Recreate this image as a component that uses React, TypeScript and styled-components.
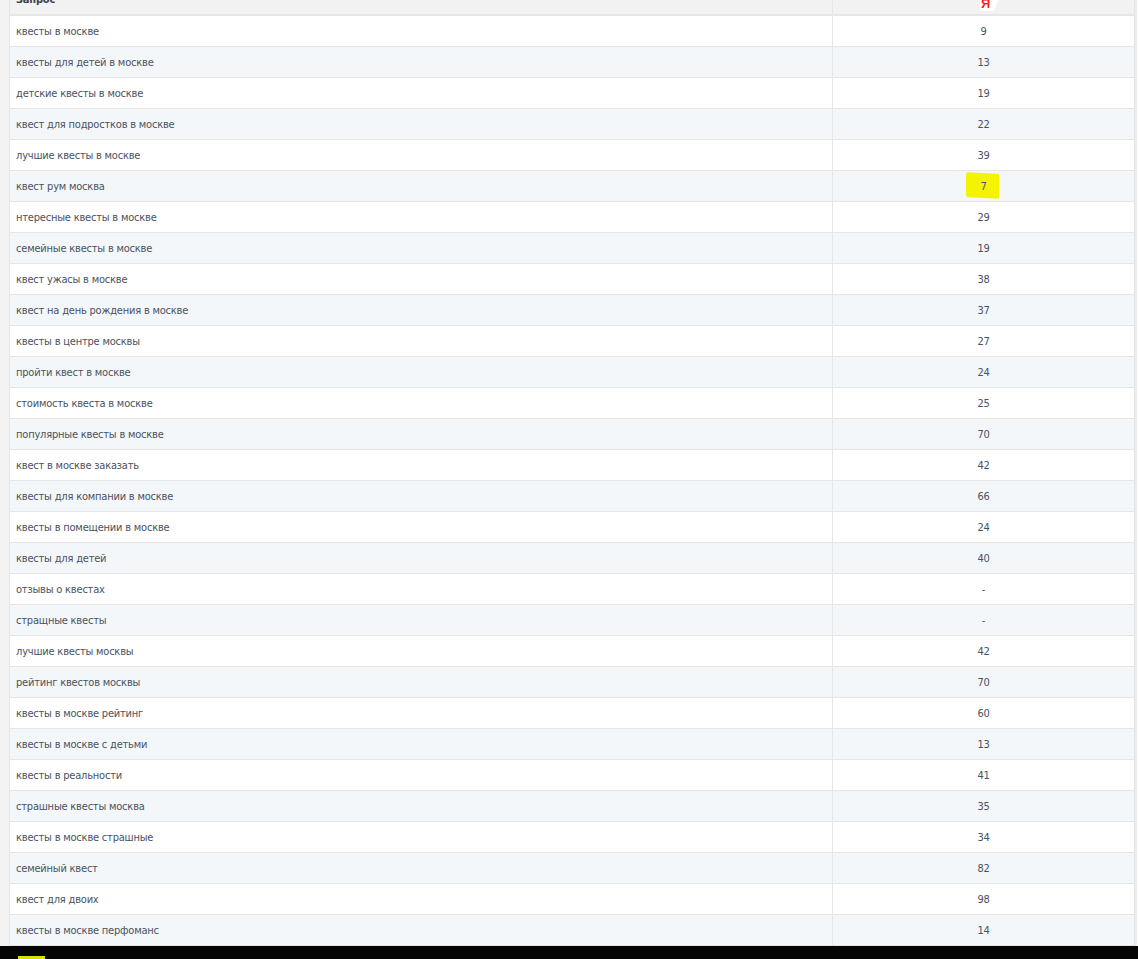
import React from 'react';
import styled, { createGlobalStyle } from 'styled-components';

const rows: { query: string; pos: string; mark?: boolean }[] = [
  { query: 'квесты в москве', pos: '9' },
  { query: 'квесты для детей в москве', pos: '13' },
  { query: 'детские квесты в москве', pos: '19' },
  { query: 'квест для подростков в москве', pos: '22' },
  { query: 'лучшие квесты в москве', pos: '39' },
  { query: 'квест рум москва', pos: '7', mark: true },
  { query: 'нтересные квесты в москве', pos: '29' },
  { query: 'семейные квесты в москве', pos: '19' },
  { query: 'квест ужасы в москве', pos: '38' },
  { query: 'квест на день рождения в москве', pos: '37' },
  { query: 'квесты в центре москвы', pos: '27' },
  { query: 'пройти квест в москве', pos: '24' },
  { query: 'стоимость квеста в москве', pos: '25' },
  { query: 'популярные квесты в москве', pos: '70' },
  { query: 'квест в москве заказать', pos: '42' },
  { query: 'квесты для компании в москве', pos: '66' },
  { query: 'квесты в помещении в москве', pos: '24' },
  { query: 'квесты для детей', pos: '40' },
  { query: 'отзывы о квестах', pos: '-' },
  { query: 'стращные квесты', pos: '-' },
  { query: 'лучшие квесты москвы', pos: '42' },
  { query: 'рейтинг квестов москвы', pos: '70' },
  { query: 'квесты в москве рейтинг', pos: '60' },
  { query: 'квесты в москве с детьми', pos: '13' },
  { query: 'квесты в реальности', pos: '41' },
  { query: 'страшные квесты москва', pos: '35' },
  { query: 'квесты в москве страшные', pos: '34' },
  { query: 'семейный квест', pos: '82' },
  { query: 'квест для двоих', pos: '98' },
  { query: 'квесты в москве перфоманс', pos: '14' },
];

export default function App() {
  return (
    <>
      <GlobalStyle />
      <StyledPage>
        <StyledMain>
          <StyledGutter />
          <StyledTable>
            <thead>
              <tr>
                <StyledHeadCell>Запрос</StyledHeadCell>
                <StyledHeadCell $center>
                  <StyledYandex>
                    Я<StyledYandexTail />
                  </StyledYandex>
                </StyledHeadCell>
              </tr>
            </thead>
            <tbody>
              {rows.map((row, i) => (
                <StyledRow key={i} $odd={i % 2 === 1}>
                  <StyledCell>{row.query}</StyledCell>
                  <StyledCell $center>
                    {row.mark ? <StyledMarker>{row.pos}</StyledMarker> : row.pos}
                  </StyledCell>
                </StyledRow>
              ))}
            </tbody>
          </StyledTable>
          <StyledEdge />
        </StyledMain>
        <StyledTaskbar>
          <StyledTaskbarItem />
        </StyledTaskbar>
      </StyledPage>
    </>
  );
}

const GlobalStyle = createGlobalStyle`
  html, body {
    margin: 0;
    padding: 0;
    background: #ffffff;
    overflow: hidden;
  }
`;

const StyledPage = styled.div`
  width: 1138px;
  height: 959px;
  display: flex;
  flex-direction: column;
  overflow: hidden;
  font-family: 'DejaVu Sans Condensed', 'DejaVu Sans', sans-serif;
`;

const StyledMain = styled.div`
  flex: 1;
  display: flex;
  overflow: hidden;
  align-items: flex-start;
`;

const StyledGutter = styled.div`
  width: 9px;
  align-self: stretch;
  background: #f3f3f3;
`;

const StyledTable = styled.table`
  width: 1126px;
  margin-top: -16px;
  border-collapse: collapse;
  table-layout: fixed;
  font-size: 11px;
  letter-spacing: -0.2px;
  color: #4a5260;
  border-left: 1px solid #e6e6e6;
  border-right: 1px solid #e6e6e6;
`;

const StyledHeadCell = styled.th<{ $center?: boolean }>`
  height: 31px;
  box-sizing: border-box;
  padding: 1px 6px 0;
  background: #f2f2f2;
  text-align: ${({ $center }) => ($center ? 'center' : 'left')};
  font-weight: bold;
  color: #3b414b;
  border-bottom: 2px solid #e6e6e6;
  border-right: 1px solid #e6e6e6;
  &:first-child {
    width: 823px;
  }
`;

const StyledYandex = styled.span`
  position: relative;
  display: inline-block;
  top: 4px;
  left: 2px;
  padding: 0 1px;
  background: #ffffff;
  color: #ff1a1a;
  font-family: 'Liberation Sans', sans-serif;
  font-weight: bold;
  font-size: 13px;
  line-height: 15px;
`;

const StyledYandexTail = styled.span`
  position: absolute;
  right: -6px;
  top: 0;
  width: 6px;
  height: 15px;
  background: #ffffff;
  transform: skewX(-25deg);
`;

const StyledRow = styled.tr<{ $odd: boolean }>`
  background: ${({ $odd }) => ($odd ? '#f4f7fa' : '#ffffff')};
`;

const StyledCell = styled.td<{ $center?: boolean }>`
  height: 31px;
  box-sizing: border-box;
  padding: 2px 6px 0;
  text-align: ${({ $center }) => ($center ? 'center' : 'left')};
  border-bottom: 1px solid #e6e6e6;
  border-right: 1px solid #e6e6e6;
  white-space: nowrap;
`;

const StyledMarker = styled.span`
  position: relative;
  display: inline-block;
  z-index: 0;
  &::before {
    content: '';
    position: absolute;
    z-index: -1;
    left: -14px;
    top: -7px;
    width: 33px;
    height: 25px;
    background: #f4f400;
    transform: skewY(3deg);
    border-radius: 2px 1px 1px 3px;
  }
`;

const StyledEdge = styled.div`
  width: 2px;
  align-self: stretch;
  background: #ececec;
`;

const StyledTaskbar = styled.div`
  height: 13px;
  flex-shrink: 0;
  background: #050505;
  position: relative;
`;

const StyledTaskbarItem = styled.div`
  position: absolute;
  left: 18px;
  bottom: 0;
  width: 27px;
  height: 3px;
  background: #d8e000;
`;
